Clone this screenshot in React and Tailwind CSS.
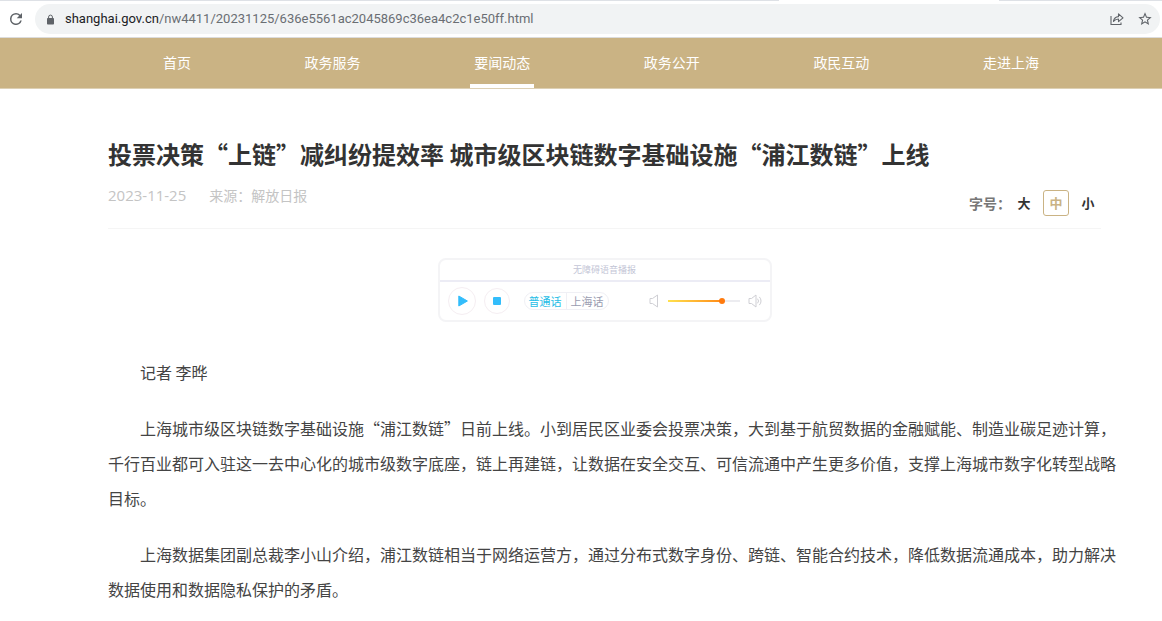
import { useState } from 'react';

const NAV_ITEMS = ['首页', '政务服务', '要闻动态', '政务公开', '政民互动', '走进上海'];

const FONT_SIZES = ['大', '中', '小'];

const PARAGRAPHS = [
  '记者 李晔',
  '上海城市级区块链数字基础设施“浦江数链”日前上线。小到居民区业委会投票决策，大到基于航贸数据的金融赋能、制造业碳足迹计算，千行百业都可入驻这一去中心化的城市级数字底座，链上再建链，让数据在安全交互、可信流通中产生更多价值，支撑上海城市数字化转型战略目标。',
  '上海数据集团副总裁李小山介绍，浦江数链相当于网络运营方，通过分布式数字身份、跨链、智能合约技术，降低数据流通成本，助力解决数据使用和数据隐私保护的矛盾。',
];

function BrowserBar() {
  return (
    <div className="bg-white border-b border-[#dcdcdc]">
      {/* Bottom edge of the tab strip */}
      <div className="flex h-px">
        <div className="w-[67%] bg-[#dee1e6]" />
        <div className="w-[19%]" />
        <div className="flex-1 bg-[#dee1e6]" />
      </div>
      <div className="flex items-center py-[3px] pr-[2px]">
        <button type="button" aria-label="重新加载" className="w-[35px] flex justify-center pr-1">
          <svg viewBox="0 0 24 24" className="w-[18px] h-[18px]" fill="#5f6368">
            <path d="M17.65 6.35A7.96 7.96 0 0 0 12 4a8 8 0 1 0 7.73 10h-2.08A6 6 0 1 1 12 6c1.66 0 3.14.69 4.22 1.78L13 11h7V4l-2.35 2.35z" />
          </svg>
        </button>
        <div className="flex-1 flex items-center h-[30px] rounded-full bg-[#f1f3f4] pl-[11px] pr-[7px]">
          <svg viewBox="0 0 9 11" className="w-[9px] h-[11px] mr-[10px]" fill="#5f6368">
            <rect x="1" y="4" width="7" height="6.5" rx="0.8" />
            <path d="M2.6 4.5V3a1.9 1.9 0 0 1 3.8 0v1.5" fill="none" stroke="#5f6368" strokeWidth="1" />
          </svg>
          <div className="flex-1 font-[Roboto,sans-serif] text-[13px] leading-5 text-[#6a6e73] whitespace-nowrap">
            <span className="text-[#202124]">shanghai.gov.cn</span>
            /nw4411/20231125/636e5561ac2045869c36ea4c2c1e50ff.html
          </div>
          <button type="button" aria-label="分享" className="mr-[13px]">
            <svg viewBox="0 0 14 14" className="w-[14px] h-[14px]" fill="none" stroke="#5f6368" strokeWidth="1.1">
              <path d="M1 4v8.5h10V10.5" />
              <path d="M3.5 9.5C4 6 6 4.7 8.5 4.6V1.8L13 5.8 8.5 9.6V7C6.5 7 5 7.7 3.5 9.5z" strokeLinejoin="round" />
            </svg>
          </button>
          <button type="button" aria-label="收藏">
            <svg viewBox="0 0 24 24" className="w-[16px] h-[16px]" fill="#5f6368">
              <path d="M22 9.24l-7.19-.62L12 2 9.19 8.63 2 9.24l5.46 4.73L5.82 21 12 17.27 18.18 21l-1.63-7.03L22 9.24zM12 15.4l-3.76 2.27 1-4.28-3.32-2.88 4.38-.38L12 6.1l1.71 4.04 4.38.38-3.32 2.88 1 4.28L12 15.4z" />
            </svg>
          </button>
        </div>
      </div>
    </div>
  );
}

function SiteNav() {
  return (
    <nav className="flex justify-between bg-[#cab384] border-b border-[#ddd0b4] pl-[159px] pr-[119px]">
      {NAV_ITEMS.map((item) => {
        const isCurrent = item === '要闻动态';
        return (
          <a
            key={item}
            href="#"
            className={`px-1 pt-[14px] pb-3 text-sm leading-5 text-white border-b-4 ${
              isCurrent ? 'border-white' : 'border-transparent'
            }`}
          >
            {item}
          </a>
        );
      })}
    </nav>
  );
}

function AudioPlayer() {
  const [dialect, setDialect] = useState('普通话');
  const [volume, setVolume] = useState(75);

  return (
    <section className="w-[334px] rounded-lg border-2 border-[#f4f4f6] bg-white">
      <h2 className="h-[22px] flex items-center justify-center border-b-2 border-[#ececf5] text-[9px] text-[#c3c5d6]">
        无障碍语音播报
      </h2>
      <div className="flex items-center h-[38px] px-2">
        <button
          type="button"
          aria-label="播放"
          className="w-7 h-7 rounded-full border border-[#f5eef2] flex items-center justify-center"
        >
          <svg viewBox="0 0 10 12" className="w-[10px] h-[12px] ml-[2px]" fill="#33bdfb">
            <path d="M0.8 1L9.4 6L0.8 11z" stroke="#33bdfb" strokeLinejoin="round" />
          </svg>
        </button>
        <button
          type="button"
          aria-label="停止"
          className="ml-2 w-[26px] h-[26px] rounded-full border border-[#f5eef2] flex items-center justify-center"
        >
          <span className="w-2 h-2 rounded-[1px] bg-[#33bdfb]" />
        </button>
        <div className="ml-[14px] flex rounded-full border border-[#f0f0f5] divide-x divide-[#f0f0f5] text-[11px] leading-4">
          {['普通话', '上海话'].map((name) => (
            <button
              key={name}
              type="button"
              onClick={() => setDialect(name)}
              className={`px-1 ${dialect === name ? 'text-[#1fbde6]' : 'text-[#9a9cb0]'}`}
            >
              {name}
            </button>
          ))}
        </div>
        <svg viewBox="0 0 10 14" className="w-[10px] h-[14px] ml-auto mr-[9px]" fill="none" stroke="#cfcfd4">
          <path d="M1 4.5h2.5L8.5 1v12L3.5 9.5H1z" strokeLinejoin="round" />
        </svg>
        <div className="relative w-[72px] h-[8px] flex items-center">
          <div className="w-full h-[2px] bg-[#ececf0]">
            <div
              className="h-full bg-linear-to-r from-[#ffe14d] to-[#ff8a14]"
              style={{ width: `${volume}%` }}
            />
          </div>
          <span
            className="absolute w-[6px] h-[6px] -ml-[3px] rounded-full bg-[#ff7a0d]"
            style={{ left: `${volume}%` }}
          />
          <input
            type="range"
            aria-label="音量"
            min="0"
            max="100"
            value={volume}
            onChange={(e) => setVolume(Number(e.target.value))}
            className="absolute inset-0 w-full h-full opacity-0"
          />
        </div>
        <svg viewBox="0 0 14 14" className="w-[14px] h-[14px] ml-[8px]" fill="none" stroke="#cfcfd4">
          <path d="M1 4.5h2.5L8 1v12L3.5 9.5H1z" strokeLinejoin="round" />
          <path d="M9.8 5a3 3 0 0 1 0 4M11.6 3.2a5.4 5.4 0 0 1 0 7.6" strokeLinecap="round" />
        </svg>
      </div>
    </section>
  );
}

function FontSizePicker() {
  const [size, setSize] = useState('中');

  return (
    <div className="flex items-center mt-[5px] text-[13px] font-bold text-[#333]">
      <span className="text-sm text-[#777]">字号：</span>
      {FONT_SIZES.map((name) => (
        <button
          key={name}
          type="button"
          onClick={() => setSize(name)}
          className={`w-[26px] h-[26px] rounded-[3px] border ml-[6px] first-of-type:ml-0 ${
            size === name ? 'border-[#cab384] text-[#cab384]' : 'border-transparent'
          }`}
        >
          {name}
        </button>
      ))}
    </div>
  );
}

export default function App() {
  return (
    <div lang="zh-CN" className="bg-white font-['Noto_Sans_CJK_SC',sans-serif]">
      <BrowserBar />
      <SiteNav />
      <main className="pl-[108px] pr-[61px] pt-[47px]">
        <header className="border-b border-[#f5f5f5] pb-3">
          <h1 className="text-2xl leading-9 font-bold text-[#333]">
            投票决策“上链”减纠纷提效率 城市级区块链数字基础设施“浦江数链”上线
          </h1>
          <div className="flex justify-between items-start mt-[13px]">
            <p className="text-sm leading-5 text-[#c4c4c4]">
              <time className="font-['Open_Sans',sans-serif] text-[15px] mr-[23px]">2023-11-25</time>
              来源：解放日报
            </p>
            <FontSizePicker />
          </div>
        </header>
        <div className="flex justify-center mt-[29px]">
          <AudioPlayer />
        </div>
        <article className="mt-[33px] -mr-[15px] text-base leading-[35px] text-[#444]">
          {PARAGRAPHS.map((text) => (
            <p key={text} className="indent-[2em] mb-[21px]">
              {text}
            </p>
          ))}
        </article>
      </main>
    </div>
  );
}
